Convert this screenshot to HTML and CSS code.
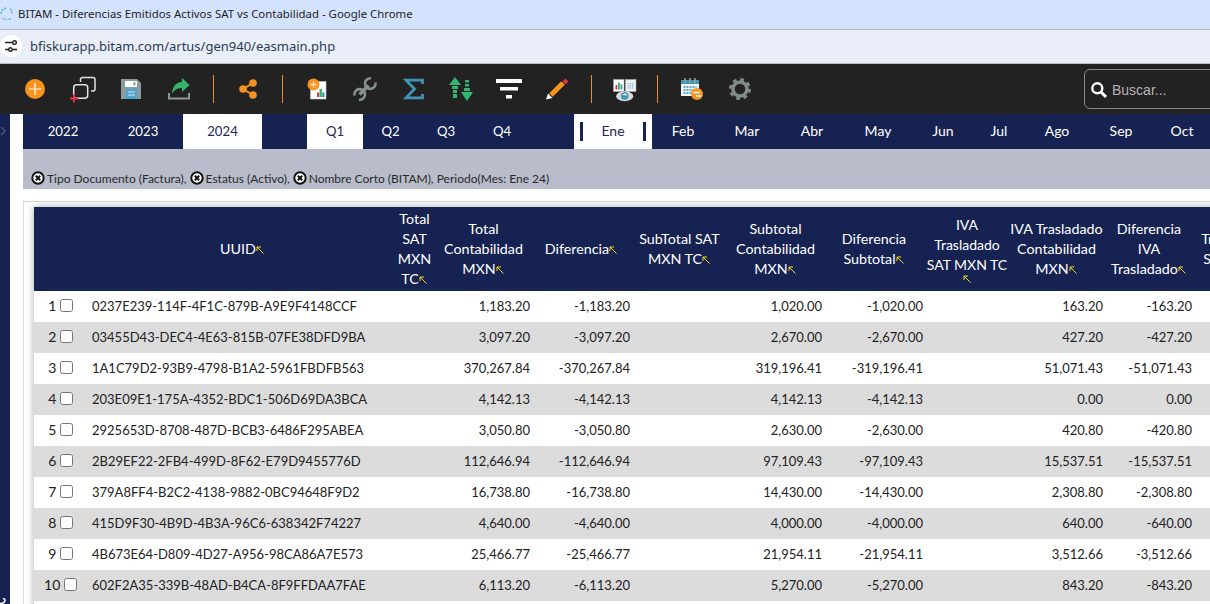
FILE: index.html
```html
<!DOCTYPE html>
<html lang="es">
<head>
<meta charset="utf-8">
<title>BITAM - Diferencias Emitidos Activos SAT vs Contabilidad</title>
<link rel="stylesheet" href="styles.css">
</head>
<body>
<svg class="defs" width="0" height="0" aria-hidden="true">
  <symbol id="clear" viewBox="0 0 14 14"><circle cx="7" cy="7" r="5.7" fill="#fff" stroke="#111" stroke-width="2"/><path d="M4.800 4.800l4.400 4.400M9.200 4.800l-4.400 4.400" stroke="#111" stroke-width="2"/></symbol>
  <symbol id="sort" viewBox="0 0 9 9"><path d="M1 1l6.500 6.500M1 1h4M1 1v4" fill="none" stroke="#f0dc1e" stroke-width="1"/></symbol>
</svg>
<div class="titlebar">
  <svg class="favicon" width="14" height="14" viewBox="0 0 14 14"><path d="M1 8a6 6 0 0 1 6-6M3 12a5 5 0 0 0 8 0M10 3a5 5 0 0 1 2 5" fill="none" stroke="#5db7e8" stroke-width="1.600" stroke-dasharray="2 1"/></svg>
  <span>BITAM - Diferencias Emitidos Activos SAT vs Contabilidad - Google Chrome</span>
</div>
<div class="addressbar">
  <span class="site-btn"><svg width="14" height="12" viewBox="0 0 14 12"><path d="M1 2.500h7M1 9.500h3" stroke="#222" stroke-width="1.600"/><circle cx="10.500" cy="2.500" r="1.800" fill="none" stroke="#222" stroke-width="1.400"/><circle cx="6.500" cy="9.500" r="1.800" fill="none" stroke="#222" stroke-width="1.400"/><path d="M9 9.500h4" stroke="#222" stroke-width="1.600"/></svg></span>
  <span class="url">bfiskurapp.bitam.com/artus/gen940/easmain.php</span>
</div>
<div class="toolbar">
  <span class="tool"><svg width="28" height="28" viewBox="0 0 28 28"><circle cx="14" cy="14" r="10" fill="#f7941d"/><path d="M8 14h12M14 8v12" stroke="#fde3bd" stroke-width="1.700"/></svg></span>
  <span class="tool"><svg width="28" height="28" viewBox="0 0 28 28"><path d="M11.500 7V4.500a2 2 0 0 1 2-2H24a2 2 0 0 1 2 2V14a2 2 0 0 1-2 2h-2" fill="none" stroke="#e2e2e2" stroke-width="1.500"/><rect x="4.700" y="9.700" width="14" height="13.600" rx="3" fill="none" stroke="#e2e2e2" stroke-width="1.500"/><path d="M1 23.500h8M5 19.500v8" stroke="#e5304a" stroke-width="2"/></svg></span>
  <span class="tool"><svg width="28" height="28" viewBox="0 0 28 28"><path d="M4 4h16l4 4v16H4z" fill="#8b9a9f"/><rect x="8" y="6" width="12" height="6" fill="#fff"/><rect x="16.500" y="7" width="2" height="3.500" fill="#8b9a9f"/><rect x="9" y="14" width="11" height="10" fill="#4aa5cc"/><path d="M11 17h7M11 20h7" stroke="#d6edf7" stroke-width="1"/></svg></span>
  <span class="tool"><svg width="28" height="28" viewBox="0 0 28 28"><path d="M17 3l7.500 7-7.500 7v-4c-5 0-8 2-10 6 0-7 4-12 10-12z" fill="#35b56a"/><path d="M4 18v5.500h20V18" fill="none" stroke="#8b9a96" stroke-width="2"/></svg></span>
  <span class="sep"></span>
  <span class="tool"><svg width="28" height="28" viewBox="0 0 28 28"><path d="M19 8L9 14l10 6" fill="none" stroke="#f39220" stroke-width="2"/><circle cx="9" cy="14" r="3.800" fill="#f39220"/><circle cx="19" cy="8" r="3.800" fill="#f39220"/><circle cx="19" cy="20" r="3.800" fill="#f39220"/></svg></span>
  <span class="sep"></span>
  <span class="tool"><svg width="28" height="28" viewBox="0 0 28 28"><rect x="7.500" y="6.500" width="15.500" height="17.500" fill="#fff" stroke="#ccc" stroke-width=".6"/><circle cx="10.500" cy="9.500" r="6" fill="#f7941d"/><path d="M7.500 9.500h6M10.500 6.500v6" stroke="#fde3bd" stroke-width="1.300"/><rect x="14" y="17.500" width="2.300" height="4.500" fill="#e5304a"/><rect x="16.600" y="14" width="2.300" height="8" fill="#35b56a"/><rect x="19.200" y="17.500" width="2.300" height="4.500" fill="#3f94b3"/></svg></span>
  <span class="tool"><svg width="28" height="28" viewBox="0 0 28 28"><path d="M8.500 19.500L17.500 10.500" stroke="#85918d" stroke-width="3.600"/><path d="M24.500 7.500a5.300 5.300 0 1 1-4.500-4.200" fill="none" stroke="#85918d" stroke-width="2.600"/><path d="M3.500 20.500a5.300 5.300 0 1 1 4.500 4.200" fill="none" stroke="#85918d" stroke-width="2.600"/></svg></span>
  <span class="tool"><svg width="28" height="28" viewBox="0 0 28 28"><path d="M23.500 9V5.200H7l8.500 8.800L7 22.800h16.500V19" fill="none" stroke="#3f94b3" stroke-width="2.800"/></svg></span>
  <span class="tool"><svg width="28" height="28" viewBox="0 0 28 28" fill="#2eb872"><path d="M8 2l6 8H2z"/><rect x="5" y="11" width="6" height="3"/><rect x="6" y="15" width="4" height="3"/><rect x="6" y="19" width="4" height="4"/><path d="M20 26l-6-9h12z"/><rect x="18" y="5" width="4" height="2.500"/><rect x="18" y="9" width="4" height="2.500"/><rect x="17" y="13" width="6" height="3"/></svg></span>
  <span class="tool"><svg width="28" height="28" viewBox="0 0 28 28" fill="#fff"><rect x="1" y="4" width="26" height="4"/><rect x="5" y="12" width="18" height="3.500"/><rect x="11" y="20" width="6" height="3.500"/></svg></span>
  <span class="tool"><svg width="28" height="28" viewBox="0 0 28 28"><path d="M8 20L20 8" stroke="#f7941d" stroke-width="5"/><path d="M19.500 6.500l3-3 3 3-3 3z" fill="#e5304a"/><path d="M3 24.500l2-6 4.500 4.500z" fill="#fff"/></svg></span>
  <span class="sep"></span>
  <span class="tool"><svg width="28" height="28" viewBox="0 0 28 28"><rect x="1.500" y="4.500" width="10.500" height="12" fill="#fff" stroke="#aaa" stroke-width=".6"/><rect x="13.500" y="4.500" width="10.500" height="12" fill="#eef2f5" stroke="#aaa" stroke-width=".6"/><rect x="3.500" y="10" width="1.800" height="4.500" fill="#e5304a"/><rect x="6" y="7.500" width="1.800" height="7" fill="#35b56a"/><rect x="8.500" y="9.500" width="1.800" height="5" fill="#3f94b3"/><path d="M15.500 8.500h6.500M15.500 10.700h6.500M15.500 12.900h6.500" stroke="#6fb2cf" stroke-width="1.200" stroke-dasharray="1.300 .9"/><ellipse cx="12.700" cy="21.300" rx="8.500" ry="5" fill="#d5dbdc"/><circle cx="12.700" cy="21" r="3.800" fill="#3f94b3"/><path d="M10.200 20.300a2.600 2.600 0 0 1 5 0z" fill="#eaf3f6"/></svg></span>
  <span class="sep sep-narrow"></span>
  <span class="tool"><svg width="28" height="28" viewBox="0 0 28 28"><rect x="4" y="5" width="18" height="16" fill="#f1f4f5"/><rect x="4" y="5" width="18" height="4" fill="#3f94b3"/><path d="M8 3v5M13 3v5M18 3v5" stroke="#9aa5a8" stroke-width="1.500"/><path d="M6.500 12h13M6.500 15h13M6.500 18h8" stroke="#5fa9c8" stroke-width="2" stroke-dasharray="2 1"/><circle cx="20" cy="19" r="6" fill="#f7941d"/><path d="M16.500 17.500h6M19 21h5.500" stroke="#fff" stroke-width="1.300"/></svg></span>
  <span class="tool"><svg width="28" height="28" viewBox="0 0 28 28" fill="none"><circle cx="15" cy="14" r="7" stroke="#7f8c88" stroke-width="3.500"/><circle cx="15" cy="14" r="9.500" stroke="#7f8c88" stroke-width="3" stroke-dasharray="3.700 3.760"/></svg></span>
  <div class="search">
    <svg width="18" height="18" viewBox="0 0 18 18" fill="none"><circle cx="7.300" cy="7.300" r="5" stroke="#fff" stroke-width="2.400"/><path d="M11 11l5 5" stroke="#fff" stroke-width="3"/></svg>
    <span>Buscar...</span>
  </div>
</div>
<div class="workspace">
  <aside class="strip">
    <svg class="strip-chevron" width="7" height="10" viewBox="0 0 7 10"><path d="M1 1l4 4-4 4" fill="none" stroke="#46527a" stroke-width="1.500"/></svg>
    <svg class="strip-end" width="7" height="6" viewBox="0 0 7 6"><path d="M0 5.500c3 0 5-1 5-3.500 0-1-1-1.500-2-1" fill="none" stroke="#fff" stroke-width="1.500"/></svg>
  </aside>
  <main class="content">
    <nav class="periods">
      <a class="period num">2022</a><a class="period num">2023</a><a class="period num active">2024</a><span></span>
      <a class="period num active">Q1</a><a class="period num">Q2</a><a class="period num">Q3</a><a class="period num">Q4</a><span></span>
      <a class="period active marked">Ene</a><a class="period">Feb</a><a class="period">Mar</a><a class="period">Abr</a><a class="period">May</a><a class="period">Jun</a><a class="period">Jul</a><a class="period">Ago</a><a class="period">Sep</a><a class="period">Oct</a>
    </nav>
    <div class="filters">
      <svg class="clear"><use href="#clear"/></svg><span>Tipo Documento (Factura),</span>
      <svg class="clear"><use href="#clear"/></svg><span>Estatus (Activo),</span>
      <svg class="clear"><use href="#clear"/></svg><span>Nombre Corto (BITAM), Periodo(Mes: Ene 24)</span>
    </div>
    <section class="card">
      <table class="grid">
        <colgroup>
          <col class="c-index"><col class="c-uuid"><col class="c-sat"><col class="c-m1"><col class="c-m2"><col class="c-m3"><col class="c-m4"><col class="c-m5"><col class="c-m6"><col class="c-m7"><col class="c-m8"><col class="c-m9">
        </colgroup>
        <thead>
          <tr>
            <th></th>
            <th class="th-uuid">UUID<svg class="arrow"><use href="#sort"/></svg></th>
            <th>Total SAT MXN TC<svg class="arrow"><use href="#sort"/></svg></th>
            <th>Total Contabilidad MXN<svg class="arrow"><use href="#sort"/></svg></th>
            <th>Diferencia<svg class="arrow"><use href="#sort"/></svg></th>
            <th>SubTotal SAT MXN TC<svg class="arrow"><use href="#sort"/></svg></th>
            <th>Subtotal Contabilidad MXN<svg class="arrow"><use href="#sort"/></svg></th>
            <th>Diferencia Subtotal<svg class="arrow"><use href="#sort"/></svg></th>
            <th class="tight">IVA Trasladado SAT MXN TC <svg class="arrow"><use href="#sort"/></svg></th>
            <th>IVA Trasladado Contabilidad MXN<svg class="arrow"><use href="#sort"/></svg></th>
            <th>Diferencia IVA Trasladado<svg class="arrow"><use href="#sort"/></svg></th>
            <th>Tras. SAT</th>
          </tr>
        </thead>
        <tbody>
          <tr><td class="idx">1 <input type="checkbox"></td><td class="uuid">0237E239-114F-4F1C-879B-A9E9F4148CCF</td><td></td><td>1,183.20</td><td>-1,183.20</td><td></td><td>1,020.00</td><td>-1,020.00</td><td></td><td>163.20</td><td>-163.20</td><td></td></tr>
          <tr><td class="idx">2 <input type="checkbox"></td><td class="uuid">03455D43-DEC4-4E63-815B-07FE38DFD9BA</td><td></td><td>3,097.20</td><td>-3,097.20</td><td></td><td>2,670.00</td><td>-2,670.00</td><td></td><td>427.20</td><td>-427.20</td><td></td></tr>
          <tr><td class="idx">3 <input type="checkbox"></td><td class="uuid">1A1C79D2-93B9-4798-B1A2-5961FBDFB563</td><td></td><td>370,267.84</td><td>-370,267.84</td><td></td><td>319,196.41</td><td>-319,196.41</td><td></td><td>51,071.43</td><td>-51,071.43</td><td></td></tr>
          <tr><td class="idx">4 <input type="checkbox"></td><td class="uuid">203E09E1-175A-4352-BDC1-506D69DA3BCA</td><td></td><td>4,142.13</td><td>-4,142.13</td><td></td><td>4,142.13</td><td>-4,142.13</td><td></td><td>0.00</td><td>0.00</td><td></td></tr>
          <tr><td class="idx">5 <input type="checkbox"></td><td class="uuid">2925653D-8708-487D-BCB3-6486F295ABEA</td><td></td><td>3,050.80</td><td>-3,050.80</td><td></td><td>2,630.00</td><td>-2,630.00</td><td></td><td>420.80</td><td>-420.80</td><td></td></tr>
          <tr><td class="idx">6 <input type="checkbox"></td><td class="uuid">2B29EF22-2FB4-499D-8F62-E79D9455776D</td><td></td><td>112,646.94</td><td>-112,646.94</td><td></td><td>97,109.43</td><td>-97,109.43</td><td></td><td>15,537.51</td><td>-15,537.51</td><td></td></tr>
          <tr><td class="idx">7 <input type="checkbox"></td><td class="uuid">379A8FF4-B2C2-4138-9882-0BC94648F9D2</td><td></td><td>16,738.80</td><td>-16,738.80</td><td></td><td>14,430.00</td><td>-14,430.00</td><td></td><td>2,308.80</td><td>-2,308.80</td><td></td></tr>
          <tr><td class="idx">8 <input type="checkbox"></td><td class="uuid">415D9F30-4B9D-4B3A-96C6-638342F74227</td><td></td><td>4,640.00</td><td>-4,640.00</td><td></td><td>4,000.00</td><td>-4,000.00</td><td></td><td>640.00</td><td>-640.00</td><td></td></tr>
          <tr><td class="idx">9 <input type="checkbox"></td><td class="uuid">4B673E64-D809-4D27-A956-98CA86A7E573</td><td></td><td>25,466.77</td><td>-25,466.77</td><td></td><td>21,954.11</td><td>-21,954.11</td><td></td><td>3,512.66</td><td>-3,512.66</td><td></td></tr>
          <tr><td class="idx">10 <input type="checkbox"></td><td class="uuid">602F2A35-339B-48AD-B4CA-8F9FFDAA7FAE</td><td></td><td>6,113.20</td><td>-6,113.20</td><td></td><td>5,270.00</td><td>-5,270.00</td><td></td><td>843.20</td><td>-843.20</td><td></td></tr>
          <tr><td class="idx"></td><td class="uuid"></td><td></td><td></td><td></td><td></td><td></td><td></td><td></td><td></td><td></td><td></td></tr>
        </tbody>
      </table>
    </section>
  </main>
</div>
</body>
</html>
```

FILE: styles.css
```css
* { box-sizing: border-box; }
html, body { height: 100%; }
body {
  margin: 0;
  height: 604px;
  overflow: hidden;
  display: flex;
  flex-direction: column;
  background: #fff;
  font-family: Lato, "Noto Sans", sans-serif;
  color: #222;
}
.defs { position: absolute; }

.titlebar {
  height: 30px;
  flex: none;
  display: flex;
  align-items: center;
  gap: 4px;
  padding-bottom: 3px;
  background: #d3e3fd;
  border-bottom: 1px solid #b5bac4;
  font: 11.4px "Noto Sans", sans-serif;
  color: #1f1f1f;
}

.addressbar {
  height: 34px;
  flex: none;
  display: flex;
  align-items: center;
  gap: 8px;
  padding-bottom: 2px;
  background: #e9eef8;
  border-bottom: 1px solid #bcbcbc;
}
.site-btn {
  width: 22px;
  height: 22px;
  border-radius: 50%;
  background: #fff;
  display: flex;
  align-items: center;
  justify-content: center;
}
.url {
  font: 13px "Noto Sans", sans-serif;
  color: #2b3a55;
}

.toolbar {
  height: 50px;
  flex: none;
  display: flex;
  align-items: center;
  padding-left: 11px;
  background: #232222;
}
.tool {
  width: 48px;
  height: 28px;
  flex: none;
  display: flex;
  justify-content: center;
}
.sep {
  width: 21px;
  height: 28px;
  flex: none;
  position: relative;
}
.sep::after {
  content: "";
  position: absolute;
  left: 10px;
  top: 0;
  bottom: 0;
  width: 1px;
  background: #e8922c;
}
.sep-narrow { width: 17px; }
.sep-narrow::after { left: 7px; }
.search {
  margin-left: auto;
  margin-right: -60px;
  width: 186px;
  height: 40px;
  margin-top: -1px;
  display: flex;
  align-items: center;
  gap: 4px;
  padding: 2px 0 0 5px;
  border: 1px solid #8a8a8a;
  border-radius: 6px;
  font: 14px "Liberation Sans", sans-serif;
  color: #b4b4b4;
}

.workspace {
  flex: 1;
  min-height: 0;
  display: flex;
}
.strip {
  width: 10px;
  flex: none;
  background: #162252;
  display: flex;
  flex-direction: column;
  overflow: hidden;
}
.strip-chevron { margin-top: 12px; }
.strip-end { margin-top: auto; }

.content {
  flex: 1;
  min-width: 0;
  margin-left: 13px;
  display: flex;
  flex-direction: column;
  overflow: hidden;
}
.periods {
  height: 35px;
  flex: none;
  display: grid;
  grid-template-columns: 80px 80px 79px 45px 56px 55px 56px 56px 44px 78px 62px 66px 64px 68px 62px 50px 66px 62px 60px;
  background: #162252;
  font-size: 14px;
}
.period {
  display: flex;
  align-items: center;
  justify-content: center;
  padding-bottom: 2px;
  color: #fff;
}
.period.num { font-size: 13.2px; }
.period.active {
  background: #fff;
  color: #1e2a55;
}
.period.marked { position: relative; }
.period.marked::before,
.period.marked::after {
  content: "";
  position: absolute;
  top: 8px;
  height: 19px;
  width: 3px;
  background: #162252;
}
.period.marked::before { left: 6px; }
.period.marked::after { right: 6px; }

.filters {
  height: 40px;
  flex: none;
  display: flex;
  align-items: flex-end;
  gap: 2px;
  padding: 0 0 3px 8px;
  background: #b8bccb;
  font-size: 12px;
  line-height: 15px;
  color: #2a2a2a;
  white-space: nowrap;
}
.clear {
  width: 14px;
  height: 14px;
  flex: none;
  margin-bottom: 1px;
}
.filters span { margin-right: 1px; }

.card {
  flex: 1;
  min-height: 0;
  margin-top: 12px;
  padding: 5px 0 0 10px;
  border-top: 1px solid #cfcfcf;
  border-left: 1px solid #dcdcdc;
  overflow: hidden;
}
.grid {
  width: 1204px;
  table-layout: fixed;
  border-collapse: collapse;
  box-shadow: 0 0 7px rgba(0, 0, 0, .35);
  font-size: 13px;
}
.c-index { width: 54px; }
.c-uuid { width: 306px; }
.c-sat { width: 42px; }
.c-m1 { width: 96px; }
.c-m2 { width: 100px; }
.c-m3 { width: 96px; }
.c-m4 { width: 96px; }
.c-m5 { width: 101px; }
.c-m6 { width: 84px; }
.c-m7 { width: 96px; }
.c-m8 { width: 89px; }
.c-m9 { width: 44px; }

.grid th {
  height: 84px;
  padding: 0 1px 0 0;
  background: #162252;
  color: #fff;
  font-size: 14.3px;
  font-weight: 400;
  line-height: 20px;
  text-align: center;
  vertical-align: middle;
}
.grid th.th-uuid { padding-left: 4px; }
.grid th.tight { padding: 0; font-size: 14px; }
.arrow {
  width: 9px;
  height: 9px;
  vertical-align: -1px;
}
.tight .arrow {
  display: block;
  margin: 0 auto;
}
.grid td {
  height: 31px;
  padding: 0 2px 1px 0;
  text-align: right;
  line-height: 18px;
  vertical-align: middle;
  white-space: nowrap;
  color: #222;
}
.grid tbody tr:nth-child(even) td { background: #dcdcdc; }
.grid td.idx { text-align: center; padding: 1px 0 0; font-size: 14px; }
.grid td.uuid { text-align: left; padding-left: 4px; }
.idx input {
  margin: 0 1px 5px 0;
  vertical-align: middle;
  width: 13px;
  height: 13px;
}
```
